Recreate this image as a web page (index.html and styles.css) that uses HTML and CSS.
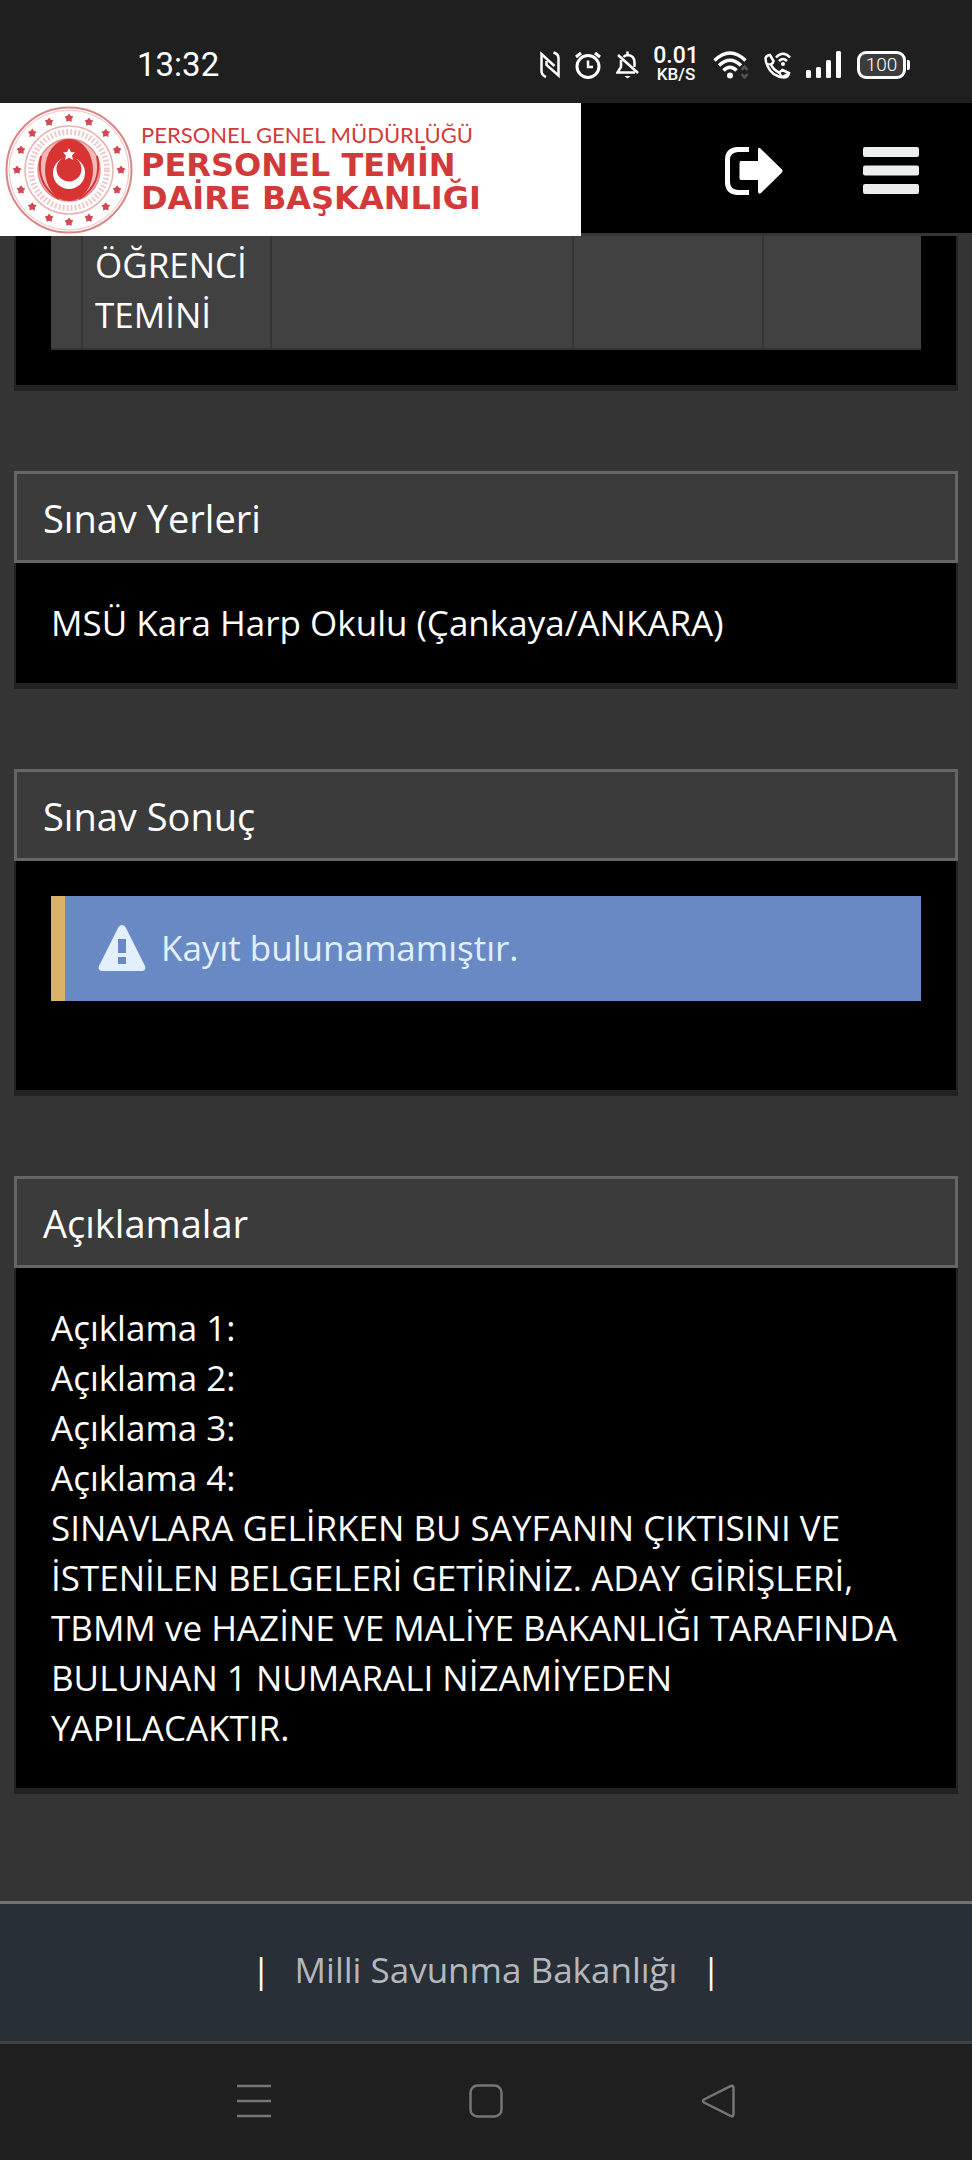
FILE: index.html
```html
<!DOCTYPE html>
<html lang="tr">
<head>
  <meta charset="UTF-8" />
  <meta name="viewport" content="width=device-width, initial-scale=1.0" />
  <title>Personel Temin Daire Başkanlığı</title>
  <link rel="stylesheet" href="styles.css">
</head>
<body>
  <div class="status-bar">
    <span class="clock">13:32</span>
    <div class="status-icons">
      <!-- nfc -->
      <svg width="20" height="28" viewBox="0 0 20 28" fill="none" stroke="#fff" stroke-width="2.5">
        <path d="M6 26 Q1.500 24 1.500 20 V3 L14.500 15" />
        <path d="M13.500 1.500 Q18.500 3 18.500 7 V24.500 L6.500 14 V10" />
      </svg>
      <!-- alarm -->
      <svg width="26" height="28" viewBox="0 0 26 28" fill="none" stroke="#fff" stroke-width="3">
        <circle cx="13" cy="15.5" r="11" />
        <path d="M13 9.5 V16 H18" stroke-width="2.5" />
        <path d="M1 6 L6 2 M25 6 L20 2" stroke-width="3" />
      </svg>
      <!-- muted bell -->
      <svg width="23" height="28" viewBox="0 0 23 28" fill="none" stroke="#fff" stroke-width="2.5">
        <path d="M2 4 L22 22" />
        <path d="M5 9 V16 L1.500 21.500 H19" />
        <path d="M7.500 6 Q9 4 11.500 4 Q18.500 4.500 18.500 11.500 V16" />
        <path d="M11.500 0.500 V4" />
        <path d="M8.500 25 H14.500 L11.500 27.500 Z" fill="#fff" stroke="none" />
      </svg>
      <div class="net-speed"><span class="rate">0.01</span><span class="unit">KB/S</span></div>
      <!-- wifi -->
      <svg width="36" height="28" viewBox="0 0 36 28" fill="none" stroke="#fff" stroke-width="3.500">
        <path d="M1.500 9.500 Q17 -5.500 32.500 9.500" />
        <path d="M6 14.500 Q17 4 28 14.500" />
        <path d="M10.500 19.500 Q17 13 23.500 19.500" />
        <circle cx="17" cy="24.500" r="3" fill="#fff" stroke="none" />
        <path d="M28.500 19 L31.500 15.500 L34.500 19 M28.500 23 L31.500 26.500 L34.500 23" stroke="#555" stroke-width="2.500" />
      </svg>
      <!-- wifi calling -->
      <svg width="27" height="28" viewBox="0 0 27 28" fill="none" stroke="#fff" stroke-width="2.500">
        <path d="M1.500 7 Q3 4 6 4 L9.500 10 Q9 12.500 7 13.500 Q9.500 19 15 21.500 L18.500 19 L25 22 Q24.500 26 20 26.500 Q8 25.500 3.500 15 Q1.500 11 1.500 7 Z" />
        <path d="M7 13.500 L3 13 M15 21.500 L18 26 L24 22.500" stroke-width="2" />
        <path d="M12 6.500 Q19 -1 26 6.500 M15 10 Q19 6 23 10" />
        <circle cx="19" cy="13" r="2" fill="#fff" stroke="none" />
      </svg>
      <!-- signal -->
      <svg width="36" height="28" viewBox="0 0 36 28" fill="#fff">
        <rect x="0" y="19" width="5" height="8" rx="1.500" />
        <rect x="10" y="16" width="5" height="11" rx="1.500" />
        <rect x="20" y="9" width="5" height="18" rx="1.500" />
        <rect x="30" y="0" width="5" height="27" rx="1.500" />
      </svg>
      <div class="battery">100</div>
    </div>
  </div>

  <header class="site-header">
    <a class="logo" href="#">
      <svg class="emblem" viewBox="-64 -64 128 128">
        <circle r="62.500" fill="none" stroke="#dc8585" stroke-width="2" />
        <circle r="60" fill="none" stroke="#efc0c0" stroke-width="1" />
        <circle r="44" fill="none" stroke="#e9b4b4" stroke-width="1.500" />
        <circle r="38" fill="none" stroke="#eecaca" stroke-width="6" stroke-dasharray="2 2" />
        <circle r="31" fill="#f4b9b9" stroke="#e08a8a" stroke-width="1.500" />
        <ellipse rx="24" ry="31" fill="#d83434" />
        <path d="M-28 -14 Q-34 14 -10 29 M28 -14 Q34 14 10 29" fill="none" stroke="#d83434" stroke-width="2" />
        <circle cy="3" r="16" fill="#fff" />
        <circle cy="-1" r="12.500" fill="#d83434" />
        <path d="M0 -22 L1.800 -18 L6 -17.600 L3 -14.500 L4 -10 L0 -12.300 L-4 -10 L-3 -14.500 L-6 -17.600 L-1.800 -18 Z" fill="#fff" />
        <g id="stars" fill="#cf4a52"></g>
      </svg>
      <span class="logo-text">
        <span class="logo-top">PERSONEL GENEL MÜDÜRLÜĞÜ</span>
        <span class="logo-main">PERSONEL TEMİN</span>
        <span class="logo-main">DAİRE BAŞKANLIĞI</span>
      </span>
    </a>
    <div class="header-actions">
      <button class="icon-btn" type="button" aria-label="Çıkış">
        <svg width="58" height="48" viewBox="0 0 58 48" fill="#fff">
          <path d="M24 2.500 H13 Q2.500 3 2.500 13 V35 Q2.500 45 13 45.500 H24" fill="none" stroke="#fff" stroke-width="5" />
          <path d="M16 14 H33 V3 Q33 -1 36 2 L57 22.500 Q58 24 57 25.500 L36 46 Q33 48 33 44 V33 H16 Q14.500 33 14.500 31 V16 Q14.500 14 16 14 Z" />
        </svg>
      </button>
      <button class="icon-btn" type="button" aria-label="Menü">
        <svg width="56" height="48" viewBox="0 0 56 48" fill="#eceeee">
          <rect y="0" width="56" height="10" rx="2" />
          <rect y="18.500" width="56" height="10" rx="2" />
          <rect y="37" width="56" height="10" rx="2" />
        </svg>
      </button>
    </div>
  </header>

  <main class="content">
    <section class="panel">
      <div class="panel-body table-body">
        <table class="exam-table">
          <colgroup>
            <col class="col-no"><col class="col-name"><col class="col-wide"><col class="col-mid"><col>
          </colgroup>
          <tbody>
            <tr>
              <td></td>
              <td>ÖĞRENCİ TEMİNİ</td>
              <td></td>
              <td></td>
              <td></td>
            </tr>
          </tbody>
        </table>
      </div>
    </section>

    <section class="panel">
      <h2 class="panel-title">Sınav Yerleri</h2>
      <div class="panel-body">MSÜ Kara Harp Okulu (Çankaya/ANKARA)</div>
    </section>

    <section class="panel">
      <h2 class="panel-title">Sınav Sonuç</h2>
      <div class="panel-body result-body">
        <div class="alert">
          <svg width="48" height="46" viewBox="0 0 48 46">
            <path d="M20.500 2 Q24 -2 27.500 2 L47 41 Q48.500 45.500 44 46 H4 Q-0.500 45.500 1 41 Z" fill="#e2effc" />
            <path d="M20 14 H28 V28 H20 Z M20 32 H28 V39 H20 Z" fill="#6989c4" />
          </svg>
          <span>Kayıt bulunamamıştır.</span>
        </div>
      </div>
    </section>

    <section class="panel">
      <h2 class="panel-title">Açıklamalar</h2>
      <div class="panel-body notes-body">
        Açıklama 1:<br />
        Açıklama 2:<br />
        Açıklama 3:<br />
        Açıklama 4:<br />
        SINAVLARA GELİRKEN BU SAYFANIN ÇIKTISINI VE İSTENİLEN BELGELERİ GETİRİNİZ. ADAY GİRİŞLERİ, TBMM ve HAZİNE VE MALİYE BAKANLIĞI TARAFINDA BULUNAN 1 NUMARALI NİZAMİYEDEN YAPILACAKTIR.
      </div>
    </section>
  </main>

  <footer class="site-footer">
    <span>|</span>
    <a href="#">Milli Savunma Bakanlığı</a>
    <span>|</span>
  </footer>

  <nav class="system-nav">
    <button class="icon-btn" type="button" aria-label="Son uygulamalar">
      <svg width="34" height="34" viewBox="0 0 34 34" stroke="#757575" stroke-width="2.500">
        <path d="M0 2 H34 M0 17 H34 M0 32 H34" />
      </svg>
    </button>
    <button class="icon-btn" type="button" aria-label="Ana ekran">
      <svg width="34" height="34" viewBox="0 0 34 34" fill="none" stroke="#757575" stroke-width="2.500">
        <rect x="1.500" y="1.500" width="31" height="31" rx="7" />
      </svg>
    </button>
    <button class="icon-btn" type="button" aria-label="Geri">
      <svg width="34" height="34" viewBox="0 0 34 34" fill="none" stroke="#757575" stroke-width="2.500">
        <path d="M30 2 Q32.500 1 32.500 4 V30 Q32.500 33 30 32 L3 18.500 Q1 17 3 15.500 Z" />
      </svg>
    </button>
  </nav>

  <script>
    // 16 stars around the emblem
    const stars = document.getElementById('stars');
    for (let i = 0; i < 16; i++) {
      const angle = i * Math.PI / 8;
      const cx = 52 * Math.sin(angle);
      const cy = -52 * Math.cos(angle);
      const points = [];
      for (let j = 0; j < 10; j++) {
        const r = j % 2 ? 2.8 : 4.6;
        const a = j * Math.PI / 5;
        points.push((cx + r * Math.sin(a)).toFixed(1) + ',' + (cy - r * Math.cos(a)).toFixed(1));
      }
      const star = document.createElementNS('http://www.w3.org/2000/svg', 'polygon');
      star.setAttribute('points', points.join(' '));
      stars.appendChild(star);
    }
  </script>
</body>
</html>
```
FILE: styles.css
```css
* {
  box-sizing: border-box;
}
body {
  margin: 0;
  min-height: 100vh;
  display: flex;
  flex-direction: column;
  background-color: #353535;
  color: #fff;
  font-family: "Open Sans", "Noto Sans", sans-serif;
  font-size: 35px;
  line-height: 50px;
}
svg {
  display: block;
  flex: none;
}
.icon-btn {
  padding: 0;
  border: none;
  background: none;
  cursor: pointer;
}

/* status bar */
.status-bar {
  height: 103px;
  padding: 26px 62px 0 137px;
  display: flex;
  align-items: center;
  justify-content: space-between;
  background-color: #1f1f1f;
  font-family: Roboto, sans-serif;
}
.clock {
  font-size: 33px;
}
.status-icons {
  display: flex;
  align-items: center;
  gap: 15px;
}
.net-speed {
  width: 44px;
  display: flex;
  flex-direction: column;
  align-items: center;
  font-weight: 500;
}
.rate {
  font-size: 23px;
  line-height: 18px;
}
.unit {
  font-size: 17px;
  line-height: 18px;
}
.battery {
  position: relative;
  width: 49px;
  height: 28px;
  margin-right: 4px;
  border: 3px solid #fff;
  border-radius: 9px;
  background-color: #3c3c3c;
  font-size: 19px;
  font-weight: 300;
  line-height: 22px;
  text-align: center;
}
.battery::after {
  content: "";
  position: absolute;
  top: 6px;
  right: -7px;
  width: 3px;
  height: 10px;
  border-radius: 0 2px 2px 0;
  background-color: #fff;
}

/* header */
.site-header {
  height: 133px;
  display: flex;
  justify-content: space-between;
  background-color: #000;
  box-shadow: inset 0 -3px #363636;
}
.logo {
  flex: 0 1 581px;
  padding-left: 5px;
  display: flex;
  align-items: center;
  gap: 8px;
  background-color: #fff;
  color: #d23a3a;
  text-decoration: none;
}
.emblem {
  width: 128px;
  height: 128px;
}
.logo-text {
  padding-bottom: 4px;
  display: flex;
  flex-direction: column;
  white-space: nowrap;
}
.logo-top {
  font-family: Lato, "Liberation Sans", sans-serif;
  font-size: 22px;
  line-height: 28px;
}
.logo-main {
  font-family: "DejaVu Sans", sans-serif;
  font-size: 32px;
  font-weight: 700;
  line-height: 33px;
}
.header-actions {
  padding: 3px 53px 0 0;
  display: flex;
  align-items: center;
  gap: 80px;
}

/* panels */
.content {
  flex: 1;
  padding: 0 14px;
  display: flex;
  flex-direction: column;
  gap: 80px;
}
.panel-title {
  margin: 0;
  padding: 19px 26px 17px;
  border: 3px solid #666;
  background-color: #3b3b3b;
  font-size: 38px;
  font-weight: 400;
}
.panel-body {
  padding: 35px;
  border: 2px solid #232323;
  border-top: none;
  border-bottom-width: 6px;
  background-color: #000;
}
.table-body {
  padding-top: 0;
}
.result-body {
  padding-bottom: 89px;
}
.notes-body {
  padding-right: 48px;
}
.exam-table {
  width: 100%;
  table-layout: fixed;
  border-collapse: collapse;
  background-color: #414141;
}
.exam-table td {
  padding: 4px 12px 8px;
  border: 2px solid #343434;
  border-width: 0 0 2px 2px;
  vertical-align: top;
}
.exam-table td:first-child {
  border-left: none;
}
.col-no {
  width: 31px;
}
.col-name {
  width: 189px;
}
.col-wide {
  width: 302px;
}
.col-mid {
  width: 190px;
}

.alert {
  padding: 27px 33px 28px;
  display: flex;
  align-items: center;
  gap: 15px;
  border-left: 14px solid #dcb26a;
  background-color: #6989c4;
  color: #e2effc;
}

/* footer */
.site-footer {
  margin-top: 107px;
  height: 143px;
  padding-bottom: 6px;
  display: flex;
  align-items: center;
  justify-content: center;
  gap: 24px;
  border-top: 3px solid #6f7376;
  border-bottom: 3px solid #3d4246;
  background-color: #282f37;
}
.site-footer a {
  color: #b5b8bb;
  text-decoration: none;
}
.system-nav {
  height: 116px;
  padding: 0 237px 3px;
  display: flex;
  align-items: center;
  justify-content: space-between;
  background-color: #1f1f1f;
}
```
